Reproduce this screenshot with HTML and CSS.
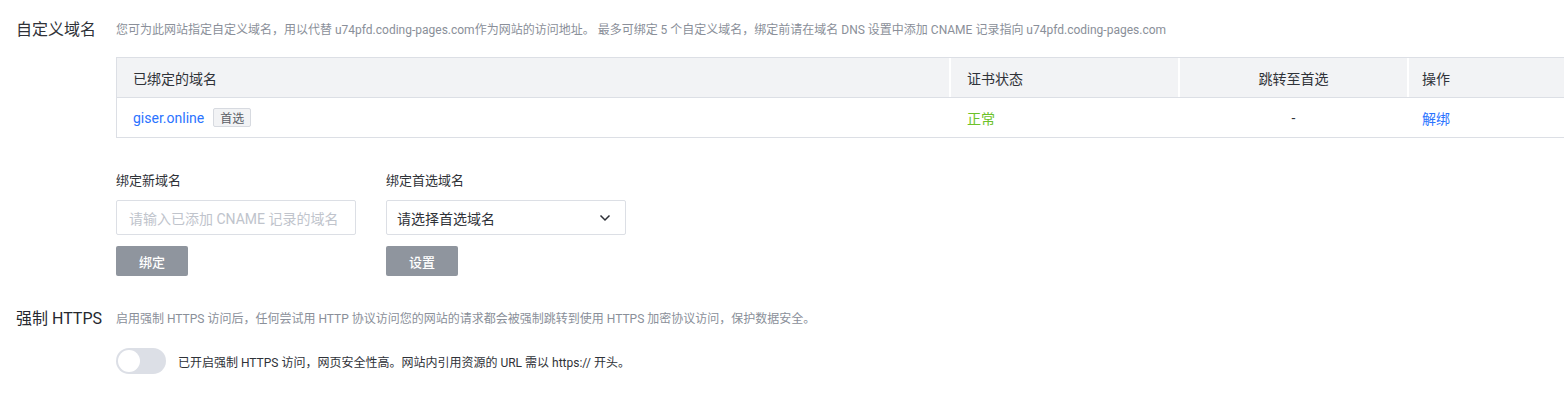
FILE: index.html
```html
<!DOCTYPE html>
<html lang="zh-CN">
<head>
<meta charset="utf-8">
<title>自定义域名</title>
<link rel="stylesheet" href="styles.css">
</head>
<body>
<div class="page">
  <section class="section">
    <div class="head">
      <h2 class="title">自定义域名</h2>
      <p class="desc">您可为此网站指定自定义域名，用以代替 u74pfd.coding-pages.com作为网站的访问地址。 最多可绑定 5 个自定义域名，绑定前请在域名 DNS 设置中添加 CNAME 记录指向 u74pfd.coding-pages.com</p>
    </div>
    <div class="body">
      <div class="table">
        <div class="thead">
          <div class="cell c1">已绑定的域名</div>
          <div class="cell c2">证书状态</div>
          <div class="cell c3 center">跳转至首选</div>
          <div class="cell c4">操作</div>
        </div>
        <div class="trow">
          <div class="cell c1"><a class="link">giser.online</a><span class="tag">首选</span></div>
          <div class="cell c2"><span class="ok">正常</span></div>
          <div class="cell c3 center">-</div>
          <div class="cell c4"><a class="link">解绑</a></div>
        </div>
      </div>

      <div class="forms">
        <div class="field">
          <label class="label">绑定新域名</label>
          <div class="input"><span class="placeholder">请输入已添加 CNAME 记录的域名</span></div>
          <button class="btn">绑定</button>
        </div>
        <div class="field">
          <label class="label">绑定首选域名</label>
          <div class="input select"><span class="value">请选择首选域名</span>
            <svg class="chev" width="12" height="8" viewBox="0 0 12 8"><path d="M1.5 1.5 6 6l4.5-4.5" fill="none" stroke="#2c2f36" stroke-width="1.5"/></svg>
          </div>
          <button class="btn">设置</button>
        </div>
      </div>
    </div>
  </section>

  <section class="section second">
    <div class="head">
      <h2 class="title bold">强制 HTTPS</h2>
      <p class="desc">启用强制 HTTPS 访问后，任何尝试用 HTTP 协议访问您的网站的请求都会被强制跳转到使用 HTTPS 加密协议访问，保护数据安全。</p>
    </div>
    <div class="body">
      <div class="switch-row">
        <span class="switch"><span class="knob"></span></span>
        <span class="switch-text">已开启强制 HTTPS 访问，网页安全性高。网站内引用资源的 URL 需以 https:// 开头。</span>
      </div>
    </div>
  </section>
</div>
</body>
</html>
```
FILE: styles.css
```css
* { box-sizing: border-box; }
html, body {
  margin: 0;
  padding: 0;
  background: #fff;
  overflow: hidden;
}
body {
  font-family: Roboto, "Noto Sans CJK SC", sans-serif;
  color: #323232;
  width: 1564px;
  height: 396px;
}
.page {
  padding: 20px 0 0 16px;
}
.section.second {
  margin-top: 33px;
}
.head {
  display: flex;
  align-items: center;
  height: 20px;
}
.title {
  margin: 0;
  width: 100px;
  flex: none;
  font-size: 16px;
  line-height: 20px;
  font-weight: 400;
  color: #2f3238;
  white-space: nowrap;
}
.title.bold {
  font-weight: 400;
  color: #25282e;
}
.desc {
  margin: 0;
  font-size: 12px;
  line-height: 20px;
  color: #8a8f99;
  white-space: nowrap;
}
.body {
  padding-left: 100px;
}
.table {
  margin-top: 17px;
  width: 1520px;
  border: 1px solid #dcdfe5;
  border-right: none;
}
.thead, .trow {
  display: flex;
  height: 40px;
  align-items: stretch;
}
.thead {
  background: #f2f3f5;
  border-bottom: 1px solid #dcdfe5;
}
.trow {
  height: 39px;
}
.cell {
  display: flex;
  align-items: center;
  padding-left: 16px;
  font-size: 14px;
  color: #2f3238;
  white-space: nowrap;
}
.thead .cell + .cell {
  border-left: 2px solid #fff;
}
.trow .cell + .cell {
  border-left: 2px solid transparent;
}
.c1 { width: 832px; }
.c2 { width: 229px; }
.c3 { width: 229px; }
.c4 { width: 229px; padding-left: 13px; }
.center { justify-content: center; padding-left: 0; }
.link {
  color: #2b73ff;
  text-decoration: none;
  cursor: pointer;
}
.tag {
  margin-left: 9px;
  height: 19px;
  padding: 0 6px;
  display: inline-flex;
  align-items: center;
  font-size: 12px;
  color: #5a5e66;
  background: #f2f3f5;
  border: 1px solid #d7dae0;
  border-radius: 2px;
}
.ok { color: #6cc22a; }
.forms {
  display: flex;
  gap: 30px;
  margin-top: 33px;
}
.field {
  display: flex;
  flex-direction: column;
  align-items: flex-start;
  width: 240px;
}
.label {
  font-size: 13px;
  line-height: 20px;
  color: #2f3238;
}
.input {
  margin-top: 9px;
  width: 240px;
  height: 35px;
  border: 1px solid #dcdfe5;
  border-radius: 2px;
  display: flex;
  align-items: center;
  padding: 0 12px;
  overflow: hidden;
  font-size: 14px;
  white-space: nowrap;
}
.placeholder { color: #c0c4cc; }
.select {
  justify-content: space-between;
  padding: 0 14px 0 10px;
}
.value { color: #2f3238; }
.chev { flex: none; }
.btn {
  margin-top: 11px;
  width: 72px;
  height: 30px;
  border: none;
  border-radius: 2px;
  background: #8f959e;
  color: #fff;
  font-family: inherit;
  font-size: 13px;
  font-weight: 500;
  padding: 0;
}
.switch-row {
  margin-top: 19px;
  display: flex;
  align-items: center;
  gap: 12px;
}
.switch {
  width: 50px;
  height: 26px;
  border-radius: 13px;
  background: #dcdfe6;
  display: flex;
  align-items: center;
  padding: 0 2px;
}
.knob {
  width: 22px;
  height: 22px;
  border-radius: 50%;
  background: #fff;
}
.switch-text {
  font-size: 12px;
  color: #2f3238;
  white-space: nowrap;
}
```
